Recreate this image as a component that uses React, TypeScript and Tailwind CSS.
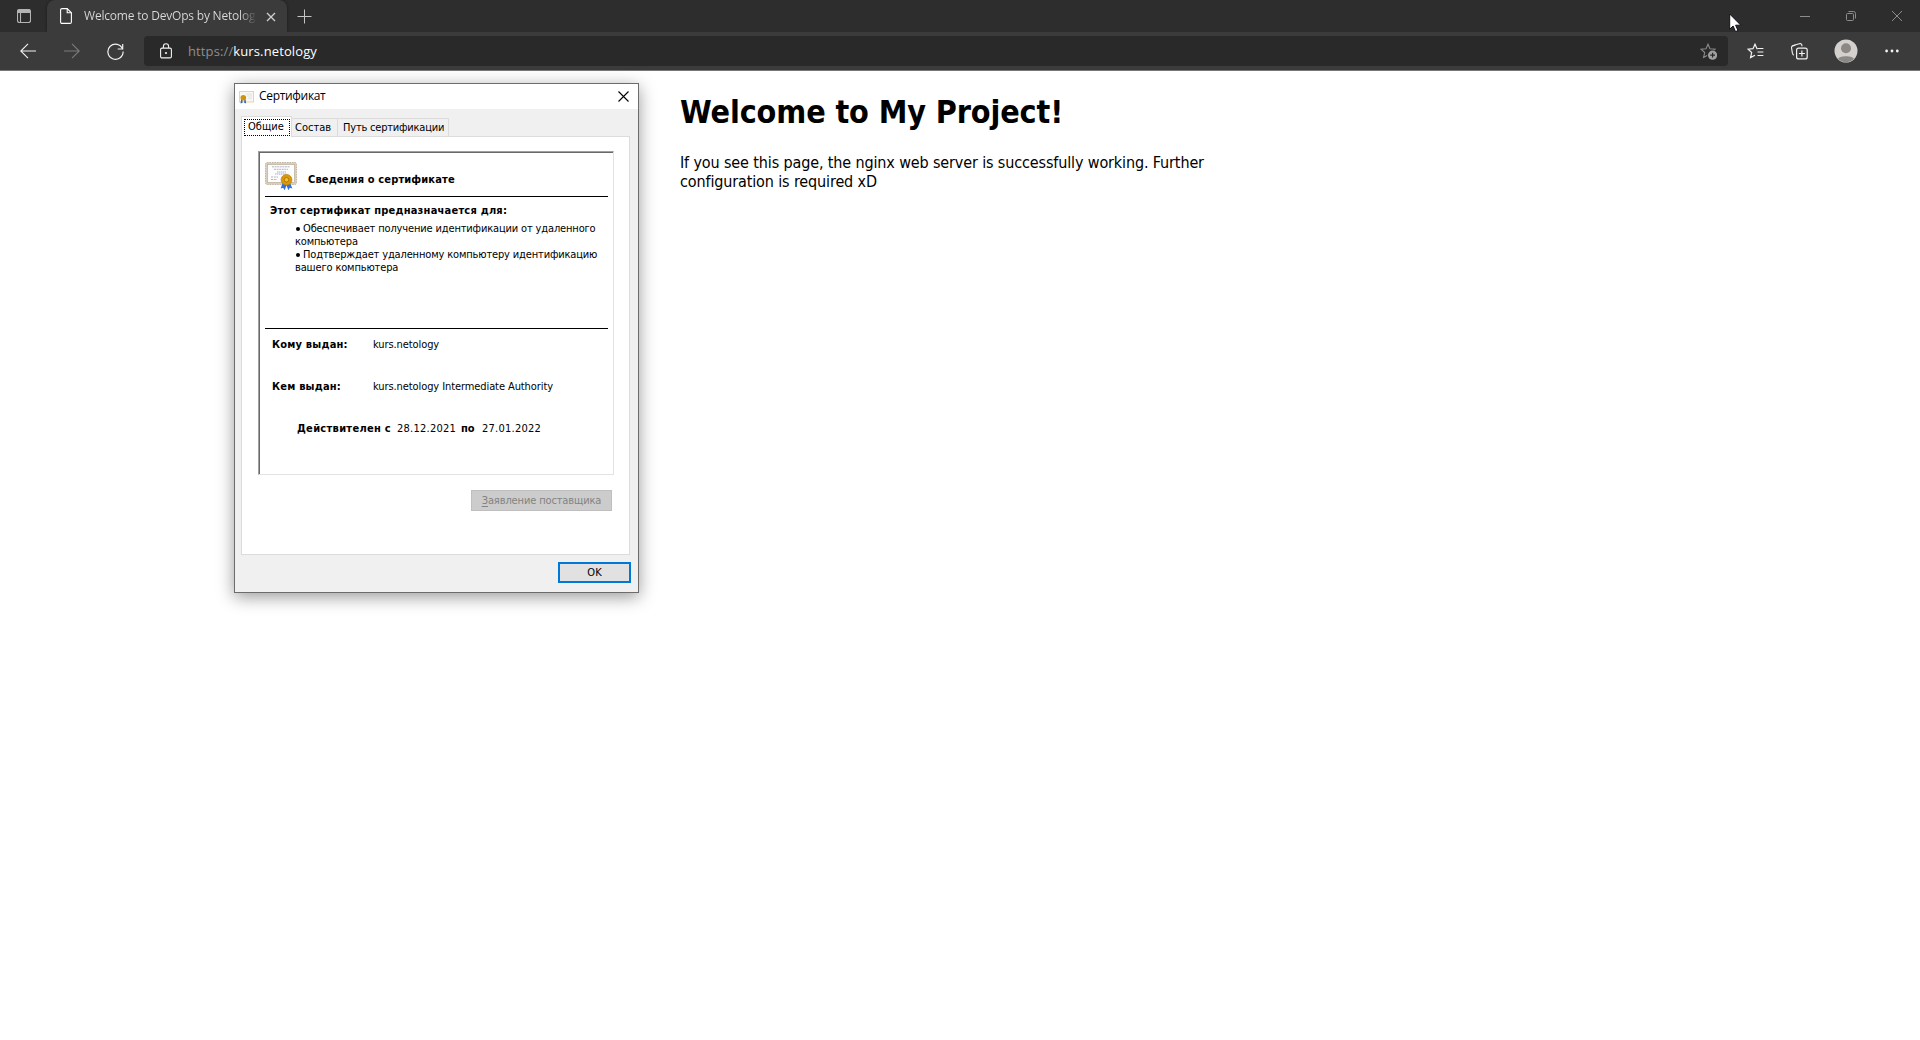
import type { ReactNode } from "react";

function Icon({ w, h = w, className = "", children }: { w: number; h?: number; className?: string; children: ReactNode }) {
  return (
    <svg
      width={w}
      height={h}
      viewBox={`0 0 ${w} ${h}`}
      fill="none"
      stroke="currentColor"
      strokeWidth="1.1"
      className={`shrink-0 ${className}`}
    >
      {children}
    </svg>
  );
}

const STAR = "M8 1.2 L10 5.7 L15 6.2 L11.3 9.5 L12.4 14.4 L8 11.9 L3.6 14.4 L4.7 9.5 L1 6.2 L6 5.7 Z";

function TabStrip() {
  return (
    <div className="flex h-8 bg-[#2d2d2d]">
      <div className="flex w-[47px] items-center pl-[17px] text-[#b4b4b4]">
        <Icon w={14}>
          <rect x="0.5" y="0.5" width="13" height="13" rx="2" />
          <path d="M1 1h12v3H1z" fill="currentColor" stroke="none" />
          <path d="M3.5 4v9" />
        </Icon>
      </div>
      <div className="flex w-[240px] items-center rounded-t-lg bg-[#3b3b3b] pl-[13px] shadow-[0_0_3px_rgba(0,0,0,0.45)]">
        <Icon w={12} h={16} className="text-white">
          <path d="M2 .6h5.2L11.4 4.8V14a1.4 1.4 0 0 1-1.4 1.4H2A1.4 1.4 0 0 1 .6 14V2A1.4 1.4 0 0 1 2 .6Z" />
          <path d="M7.2 .6V4.8H11.4" />
        </Icon>
        <div className="ml-3 w-[173px] whitespace-nowrap bg-linear-to-r from-[#dcdcdc] from-90% to-[#3b3b3b] bg-clip-text font-['Open_Sans',sans-serif] text-[12px] leading-4 tracking-[-0.2px] text-transparent">
          Welcome to DevOps by Netolog
        </div>
        <Icon w={10} className="ml-[9px] mt-px text-[#d0d0d0]">
          <path d="M1 1l8 8M9 1l-8 8" strokeWidth="1.3" />
        </Icon>
      </div>
      <div className="flex items-center pl-[10px] text-[#c4c4c4]">
        <Icon w={15}>
          <path d="M.5 7.5h14M7.5 .5v14" strokeWidth="1" />
        </Icon>
      </div>
      <div className="ml-auto flex text-[#8c8c8c]">
        <div className="flex w-[46px] items-center justify-center">
          <Icon w={10}>
            <path d="M0 5.5h10" strokeWidth="1" />
          </Icon>
        </div>
        <div className="flex w-[46px] items-center justify-center">
          <Icon w={10}>
            <rect x=".5" y="2.5" width="7" height="7" rx="1" strokeWidth="1" />
            <path d="M2.5 .5H7.5a2 2 0 0 1 2 2V7.5" strokeWidth="1" />
          </Icon>
        </div>
        <div className="flex w-[46px] items-center justify-center">
          <Icon w={10}>
            <path d="M0 0l10 10M10 0L0 10" strokeWidth="1" />
          </Icon>
        </div>
      </div>
    </div>
  );
}

function Toolbar() {
  return (
    <div className="flex h-[39px] items-center border-b border-[#787878] bg-[#3b3b3b] pl-5 text-[#f2f2f2]">
      <Icon w={16}>
        <path d="M.5 8H16M8 .8L.8 8L8 15.2" />
      </Icon>
      <Icon w={16} className="ml-7 text-[#7c7c7c]">
        <path d="M0 8H15.5M8 .8L15.2 8L8 15.2" />
      </Icon>
      <Icon w={17} className="ml-[27px]">
        <path d="M15.6 6A7.6 7.6 0 1 0 16.1 8.6" strokeWidth="1.2" />
        <path d="M15.7 1V6H10.7" strokeWidth="1.2" />
      </Icon>
      <div className="ml-[20px] flex h-[30px] w-[1584px] items-center rounded bg-[#292929] pl-4">
        <Icon w={12} h={16}>
          <rect x=".6" y="5.1" width="10.8" height="9.8" rx="1.4" />
          <path d="M3.4 5V3.4a2.6 2.6 0 0 1 5.2 0V5" />
          <circle cx="6" cy="10" r="1.1" fill="currentColor" stroke="none" />
        </Icon>
        <div className="ml-[16px] font-['Open_Sans',sans-serif] text-[13px] leading-5">
          <span className="tracking-[0.12px] text-[#8e8e8e]">https://</span>
          <span className="tracking-[0.12px] text-white">kurs.netology</span>
        </div>
        <Icon w={17} h={17} className="ml-auto mr-[11px] text-[#8a8a8a]">
          <path d={STAR} />
          <circle cx="12.6" cy="12.2" r="5.4" fill="#292929" stroke="none" />
          <circle cx="12.6" cy="12.2" r="4.6" fill="#a0a0a0" stroke="none" />
          <path d="M12.6 9.8v4.8M10.2 12.2h4.8" stroke="#292929" strokeWidth="1.2" />
        </Icon>
      </div>
      <Icon w={17} className="ml-[19px]">
        <path d="M10.6 5.9L10 5.7L8 1.2L6 5.7L1 6.2L4.7 9.5L3.6 14.6L8 12.2M10 5.7H10.4" strokeWidth="1.2" />
        <path d="M10.5 5.5H16.4M10.5 9H16.4M10.5 12.5H16.4" strokeWidth="1.2" />
      </Icon>
      <Icon w={17} className="ml-[27px]">
        <path d="M2.8 12.2C1.8 11.8 1.6 11 1.4 10.2L.6 5.2C.3 3.8 1 2.9 2.2 2.5L8.2 .8C9.6 .4 10.6 .9 10.9 2.2V3.2" />
        <path d="M1.2 3.2L4.4 2" />
        <rect x="5.6" y="5.1" width="10.6" height="10.8" rx="2" strokeWidth="1.2" />
        <path d="M10.9 7.5v6M7.9 10.5h6" strokeWidth="1.2" />
      </Icon>
      <Icon w={24} className="ml-[26px]">
        <circle cx="12" cy="12" r="11.5" fill="#d3d0cd" stroke="none" />
        <circle cx="12" cy="9.2" r="5" fill="#8c8886" stroke="none" />
        <path d="M4 19.8C5.6 16.4 18.4 16.4 20 19.8A11.2 11.2 0 0 1 4 19.8Z" fill="#8c8886" stroke="none" />
      </Icon>
      <Icon w={14} h={4} className="ml-[27px]">
        <g fill="currentColor" stroke="none">
          <circle cx="1.6" cy="2" r="1.4" />
          <circle cx="7" cy="2" r="1.4" />
          <circle cx="12.3" cy="2" r="1.4" />
        </g>
      </Icon>
    </div>
  );
}

function CertificateIcon() {
  return (
    <svg width="32" height="29" viewBox="0 0 32 29" className="mt-[9px] shrink-0">
      <rect x=".5" y=".5" width="31" height="22" rx="1.5" fill="#d9cebd" stroke="#c3b59f" strokeDasharray="1.5 1" />
      <rect x="2.5" y="2.5" width="27" height="18" fill="#fdfdfd" stroke="#b9ad9b" strokeWidth=".7" />
      <path d="M7 4.8h18M9 7.3h14" stroke="#a9abc0" strokeDasharray="2 .6" strokeWidth=".9" />
      <path d="M12 10h9M10 12h11" stroke="#9aa0d8" strokeDasharray="1.4 .5" strokeWidth=".9" />
      <path d="M6 15h7M6 17.5h6" stroke="#a9a9b4" strokeDasharray="2 .8" strokeWidth=".9" />
      <path d="M18 20l-2.4 6.4 2.6-.6 1.4 2.4 2.4-6z" fill="#2f6fe0" />
      <path d="M24.6 20l2.8 6.4-2.6-.6-1.4 2.4-2.4-6z" fill="#2f6fe0" />
      <circle cx="21.5" cy="17.8" r="5.4" fill="#d89a08" stroke="#b87b00" strokeWidth=".7" />
      <circle cx="21.5" cy="17.8" r="2.3" fill="#f0bd35" stroke="#a86f00" strokeWidth=".8" />
    </svg>
  );
}

function Fact({ label, value }: { label: string; value: string }) {
  return (
    <div className="mb-[29px] flex">
      <span className="w-[101px] font-bold tracking-[0.2px]">{label}</span>
      <span className="tracking-[-0.09px]">{value}</span>
    </div>
  );
}

function Purpose({ children }: { children: ReactNode }) {
  return (
    <div className="flex items-center">
      <span className="ml-px mr-[3px] size-1 rounded-full bg-black" />
      {children}
    </div>
  );
}

function CertificateDialog() {
  return (
    <div className="absolute left-[234px] top-[83px] flex h-[510px] w-[405px] flex-col border border-[#6c6c6c] bg-[#f0f0f0] font-['DejaVu_Sans_Condensed','DejaVu_Sans',sans-serif] text-[11px] leading-[13px] text-black shadow-[0_4px_16px_rgba(0,0,0,0.4)]">
      <div className="flex h-[25px] shrink-0 items-center bg-white pb-px pl-1 pr-[9px]">
        <svg width="15" height="13" viewBox="0 0 15 13" className="mt-[2px]">
          <rect x=".5" y=".5" width="14" height="10.5" fill="#faf7f1" stroke="#ecd2a4" />
          <path d="M7 3h6M8 5h5M9 7.2h4" stroke="#dfe2ea" />
          <path d="M2.2 8l-.7 4.6 2-.8V9zM6.4 8l.8 4.6-2-.8V9z" fill="#2563d8" />
          <circle cx="4.3" cy="6.8" r="2.8" fill="#d0930c" />
        </svg>
        <span className="ml-[5px] font-['Open_Sans',sans-serif] text-[12px] leading-4 tracking-[-0.32px]">Сертификат</span>
        <Icon w={11} h={11} className="ml-auto">
          <path d="M.5 .5l10 10M10.5 .5l-10 10" />
        </Icon>
      </div>

      <div className="ml-[6px] mt-[7px] flex h-5 shrink-0 items-end">
        <div className="relative z-10 -mb-px h-[21px] w-[51px] border border-b-0 border-[#dcdcdc] bg-white px-[2px] pt-[2px]">
          <div className="h-[17px] w-[46px] border border-dotted border-black pl-[3px] leading-[13px]">Общие</div>
        </div>
        <div className="-ml-px h-[18px] w-[47px] border border-b-0 border-[#dcdcdc] pl-[3px] pt-[2px]">Состав</div>
        <div className="-ml-px h-[18px] w-[112px] whitespace-nowrap border border-b-0 border-[#dcdcdc] pl-[5px] pt-[2px] tracking-[-0.2px]">
          Путь сертификации
        </div>
      </div>

      <div className="ml-[6px] flex h-[419px] w-[389px] shrink-0 flex-col border border-[#dcdcdc] bg-white pl-4 pt-[14px]">
        <div className="h-[324px] w-[356px] border border-b-[#e3e3e3] border-l-[#a0a0a0] border-r-[#e3e3e3] border-t-[#a0a0a0]">
          <div className="h-[322px] border-l border-t border-[#696969] pl-[5px]">
            <div className="flex h-11 w-[343px] border-b border-black">
              <CertificateIcon />
              <span className="ml-[11px] mt-[20px] font-bold tracking-[0.14px]">Сведения о сертификате</span>
            </div>
            <div className="flex h-[132px] w-[343px] flex-col whitespace-nowrap border-b border-black pl-[5px] pt-[7px]">
              <div className="font-bold tracking-[0.22px]">Этот сертификат предназначается для:</div>
              <div className="ml-[25px] mt-[5px] tracking-[-0.15px]">
                <Purpose>Обеспечивает получение идентификации от удаленного</Purpose>
                <div>компьютера</div>
                <Purpose>Подтверждает удаленному компьютеру идентификацию</Purpose>
                <div>вашего компьютера</div>
              </div>
            </div>
            <div className="whitespace-nowrap pl-[7px] pt-[9px]">
              <Fact label="Кому выдан:" value="kurs.netology" />
              <Fact label="Кем выдан:" value="kurs.netology Intermediate Authority" />
              <div className="flex pl-[25px]">
                <span className="w-[100px] font-bold tracking-[0.3px]">Действителен с</span>
                <span className="w-[64px] tracking-[0.24px]">28.12.2021</span>
                <span className="w-[21px] font-bold">по</span>
                <span className="tracking-[0.24px]">27.01.2022</span>
              </div>
            </div>
          </div>
        </div>
        <div className="ml-[213px] mt-[15px] flex h-[21px] w-[141px] items-center justify-center whitespace-nowrap border border-[#bfbfbf] bg-[#cccccc] tracking-[-0.13px] text-[#838383]">
          <span className="underline underline-offset-2">З</span>аявление поставщика
        </div>
      </div>

      <div className="ml-[323px] mt-[7px] flex h-[21px] w-[73px] shrink-0 items-center justify-center border-2 border-[#0078d7] bg-[#e1e1e1]">
        OK
      </div>
    </div>
  );
}

function Cursor() {
  return (
    <svg width="13" height="20" viewBox="0 0 13 20" className="absolute left-[1729px] top-[13px]">
      <path
        d="M.7 1V16.2L4.1 13L6.5 18.6L9 17.5L6.6 12.2H11.8Z"
        fill="#fff"
        stroke="#10101c"
        strokeWidth="1"
        strokeLinejoin="round"
      />
    </svg>
  );
}

export default function App() {
  return (
    <div className="relative h-[1040px] w-[1920px] overflow-hidden bg-white">
      <main className="flex flex-col">
        <TabStrip />
        <Toolbar />
        <div className="mx-auto w-[560px] pt-[22px] font-['DejaVu_Sans_Condensed','DejaVu_Sans',sans-serif] text-black">
          <h1 className="whitespace-nowrap text-[32px] font-bold leading-[39px] tracking-[-0.12px]">Welcome to My Project!</h1>
          <p className="mt-[21px] text-[16px] leading-[19px] tracking-[-0.13px]">
            If you see this page, the nginx web server is successfully working. Further
            <br />
            configuration is required xD
          </p>
        </div>
      </main>
      <CertificateDialog />
      <Cursor />
    </div>
  );
}
